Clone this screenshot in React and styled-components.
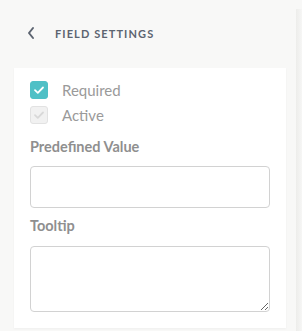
import React from "react";
import styled, { createGlobalStyle } from "styled-components";

const GlobalStyle = createGlobalStyle`
  * { box-sizing: border-box; }
  body {
    margin: 0;
    background: #f8f8f7;
    font-family: Lato, "Open Sans", sans-serif;
  }
`;

export default function App() {
  return (
    <>
      <GlobalStyle />
      <Page>
        <Panel>
          <Header>
            <BackIcon viewBox="0 0 10 14">
              <path d="M7 2 L3 7 L7 12" />
            </BackIcon>
            <Title>FIELD SETTINGS</Title>
          </Header>
          <Card>
            <CheckRow>
              <Box checked>
                <Tick viewBox="0 0 12 10" color="#fff">
                  <path d="M2 5.2 L4.8 7.8 L10 2.5" />
                </Tick>
              </Box>
              <CheckLabel>Required</CheckLabel>
            </CheckRow>
            <CheckRow>
              <Box>
                <Tick viewBox="0 0 12 10" color="#d8d8d8">
                  <path d="M2 5.2 L4.8 7.8 L10 2.5" />
                </Tick>
              </Box>
              <CheckLabel>Active</CheckLabel>
            </CheckRow>
            <FieldLabel gap="11px">Predefined Value</FieldLabel>
            <Input />
            <FieldLabel gap="9px">Tooltip</FieldLabel>
            <TextArea />
          </Card>
        </Panel>
        <Edge />
      </Page>
    </>
  );
}

const Page = styled.div`
  display: flex;
  width: 302px;
  height: 331px;
  overflow: hidden;
`;

const Panel = styled.div`
  width: 296px;
  padding: 0 10px 0 14px;
`;

const Edge = styled.div`
  width: 6px;
  margin-top: 9px;
  background: linear-gradient(to right, #ededeb, #f6f6f5);
`;

const Header = styled.div`
  display: flex;
  align-items: center;
  height: 68px;
  padding-left: 12px;
  padding-bottom: 2px;
`;

const BackIcon = styled.svg`
  width: 10px;
  height: 14px;
  fill: none;
  stroke: #5c6470;
  stroke-width: 2;
  stroke-linecap: round;
  stroke-linejoin: round;
`;

const Title = styled.span`
  margin-left: 19px;
  font-size: 11px;
  font-weight: 700;
  letter-spacing: 1.1px;
  color: #5c6470;
`;

const Card = styled.div`
  background: #fff;
  width: 272px;
  height: 260px;
  padding: 9px 16px 0 16px;
  box-shadow: 0 1px 2px rgba(0, 0, 0, 0.04);
`;

const CheckRow = styled.div`
  display: flex;
  align-items: center;
  height: 25px;
`;

const Box = styled.div`
  width: 18px;
  height: 18px;
  border-radius: 3px;
  display: flex;
  align-items: center;
  justify-content: center;
  background: ${(p) => (p.checked ? "#4fc0c6" : "#f1f1f1")};
  border: 1px solid ${(p) => (p.checked ? "#4fc0c6" : "#e2e2e2")};
`;

const Tick = styled.svg`
  width: 12px;
  height: 10px;
  fill: none;
  stroke: ${(p) => p.color};
  stroke-width: 1.8;
  stroke-linecap: round;
  stroke-linejoin: round;
`;

const CheckLabel = styled.span`
  margin-left: 14px;
  font-size: 15px;
  color: #9a9a9a;
`;

const FieldLabel = styled.div`
  margin-top: ${(p) => p.gap};
  font-size: 14.5px;
  font-weight: 700;
  color: #8f8f8f;
  line-height: 18px;
`;

const Input = styled.input`
  display: block;
  width: 240px;
  height: 42px;
  margin-top: 10px;
  border: 1px solid #d2d2d2;
  border-radius: 4px;
  outline: none;
`;

const TextArea = styled.textarea`
  display: block;
  width: 240px;
  height: 66px;
  margin-top: 11px;
  border: 1px solid #d2d2d2;
  border-radius: 4px;
  outline: none;
  resize: vertical;
`;
